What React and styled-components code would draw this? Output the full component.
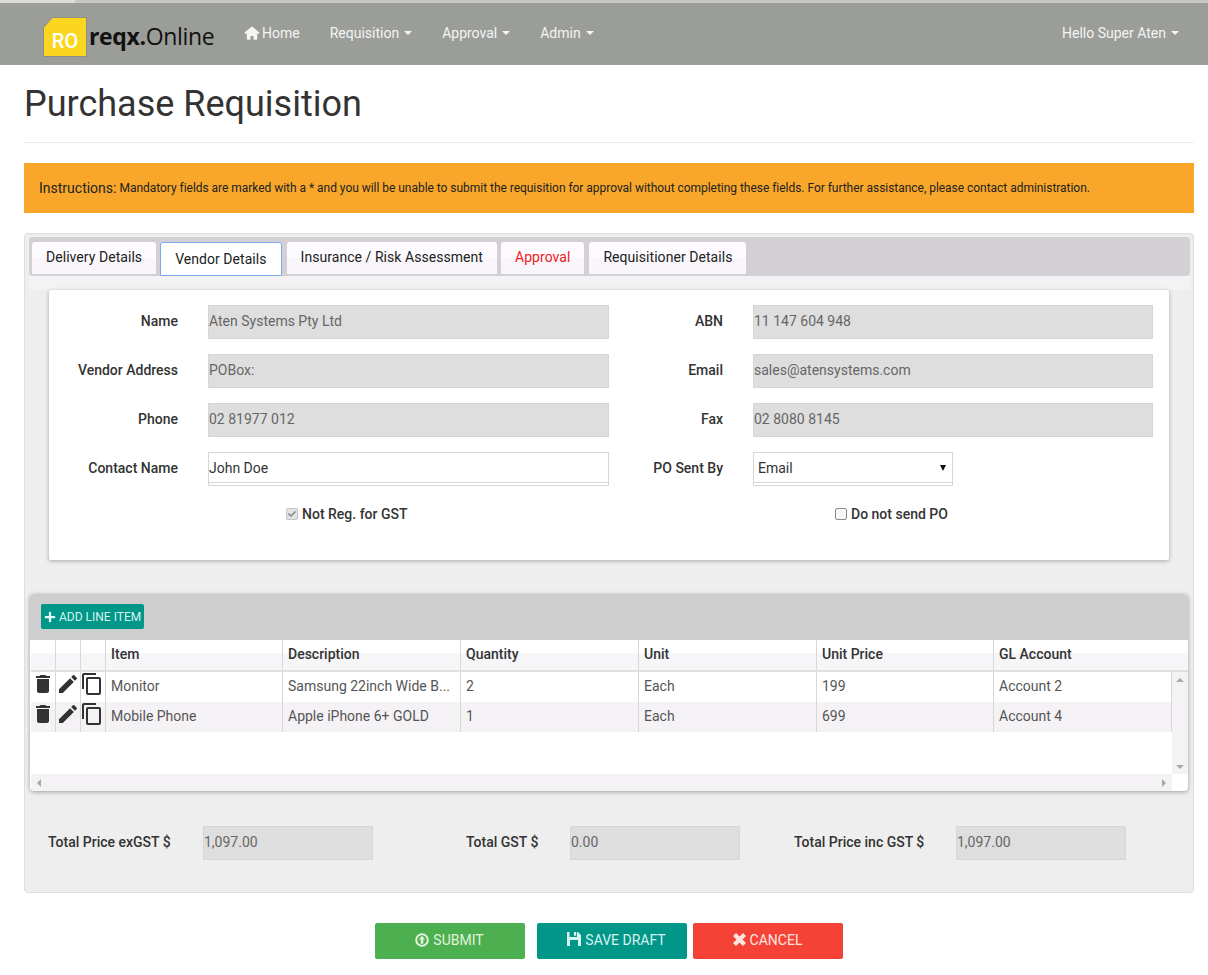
import React from 'react'
import styled, { createGlobalStyle } from 'styled-components'
import { MdDelete, MdEdit, MdContentCopy } from 'react-icons/md'
import { FaPlus, FaCheck } from 'react-icons/fa'
import { TiHome } from 'react-icons/ti'

const GlobalStyle = createGlobalStyle`
  html, body {
    margin: 0;
    padding: 0;
    background: #fff;
    font-family: Roboto, "Liberation Sans", sans-serif;
    font-size: 14px;
    color: #333;
  }
  * { box-sizing: border-box; }
`

const TopStrip = styled.div`
  height: 3px;
  background: linear-gradient(to right, #dcdcdc 75px, #c8c8c8 75px);
`
const Navbar = styled.nav`
  height: 62px;
  background: #9b9d99;
  display: flex;
  align-items: center;
  padding: 0 18px 0 43px;
  color: #f2f2f2;
`
const Brand = styled.div`
  display: flex;
  align-items: center;
  width: 200px;
  padding-top: 6px;
`
const LogoBadge = styled.div`
  position: relative;
  width: 44px;
  height: 40px;
  color: #fff;
  font-size: 20px;
  font-weight: 500;
  display: flex;
  align-items: flex-end;
  justify-content: center;
  padding-bottom: 4px;
  svg {
    position: absolute;
    top: 0;
    left: 0;
  }
  span { position: relative; }
`
const BrandText = styled.div`
  margin-left: 2px;
  font-family: "Open Sans", sans-serif;
  font-size: 23px;
  color: #111;
  margin-top: -3px;
  letter-spacing: -0.35px;
  b { font-weight: 700; }
`
const NavLink = styled.a`
  display: flex;
  align-items: center;
  font-size: 14px;
  margin-right: 30px;
  margin-top: -3px;
  color: #f4f4f4;
  svg { margin-right: 1px; }
`
const Caret = styled.span`
  display: inline-block;
  width: 0;
  height: 0;
  margin-left: 5px;
  border-top: 4px solid #f4f4f4;
  border-left: 4px solid transparent;
  border-right: 4px solid transparent;
`
const NavRight = styled(NavLink)`
  margin-left: auto;
  margin-right: 11px;
`
const Page = styled.main`
  padding: 0 14px 16px 24px;
`
const Title = styled.h1`
  margin: 0;
  padding: 17px 0 16px;
  height: 78px;
  font-size: 36px;
  line-height: 44px;
  font-weight: 400;
  color: #333;
  border-bottom: 1px solid #eee;
`
const Instructions = styled.div`
  margin-top: 20px;
  height: 50px;
  background: #f8a72b;
  display: flex;
  align-items: center;
  padding: 0 15px;
  font-size: 12px;
  letter-spacing: -0.033px;
  color: #222;
  span {
    font-size: 14px;
    letter-spacing: 0;
    margin-right: 3px;
  }
`
const Panel = styled.section`
  margin-top: 20px;
  height: 660px;
  background: #eee;
  border: 1px solid #ddd;
  border-radius: 4px;
  padding: 3px 3px 0 4px;
`
const TabBar = styled.div`
  height: 39px;
  background: #d2d0d4;
  border-radius: 4px;
  display: flex;
  padding: 5px 0 0 3px;
  gap: 4px;
`
const Tab = styled.div`
  height: ${p => (p.$active ? '34px' : '32px')};
  padding: 0 14px ${p => (p.$active ? '0' : '2px')};
  margin-left: ${p => (p.$spaced ? '1px' : '0')};
  background: ${p => (p.$active ? '#fff' : 'linear-gradient(#fdfbff 50%, #f8f6fa 50%)')};
  border: ${p => (p.$active ? '1px solid #7fa9ee' : '0')};
  border-radius: 3px 3px 0 0;
  display: flex;
  align-items: center;
  letter-spacing: 0.05px;
  color: ${p => (p.$warn ? '#f02020' : '#222')};
`
const TabStrip = styled.div`
  height: 14px;
  background: #f4f3f4;
`
const Card = styled.div`
  margin: 0 21px 0 20px;
  height: 270px;
  background: #fff;
  border-radius: 2px;
  box-shadow: 0 1px 4px rgba(0, 0, 0, 0.3);
  padding-top: 15px;
`
const FormGrid = styled.div`
  display: grid;
  grid-template-columns: 129px 401px 84px 400px;
  column-gap: 30px;
  row-gap: 15px;
  grid-auto-rows: 34px;
  align-items: center;
`
const Label = styled.label`
  text-align: right;
  font-weight: 500;
  color: #333;
  white-space: nowrap;
  padding-bottom: 2px;
`
const Field = styled.div`
  height: 34px;
  padding-bottom: 2px;
  display: flex;
  align-items: center;
  background: ${p => (p.$editable ? '#fff' : '#dedede')};
  border: 1px solid #d6d6d6;
  color: ${p => (p.$editable ? '#333' : '#666')};
`
const TextField = styled(Field)`
  box-shadow: inset 0 -2px 0 #fff, inset 0 -3px 0 #d6d6d6;
`
const SelectField = styled(TextField)`
  width: 200px;
  padding: 0 6px 2px 4px;
  justify-content: space-between;
  &::after {
    content: '';
    border-top: 6px solid #111;
    border-left: 3.5px solid transparent;
    border-right: 3.5px solid transparent;
  }
`
const CheckRow = styled.div`
  display: grid;
  grid-template-columns: 545px 1fr;
  margin-top: 20px;
  font-weight: 500;
  color: #333;
`
const CheckItem = styled.div`
  display: flex;
  align-items: center;
  padding-left: ${p => p.$left}px;
  gap: 4px;
`
const CheckBox = styled.span`
  width: 12px;
  height: 12px;
  border: 1px solid ${p => (p.$disabled ? '#c4c4c4' : '#8b8b8b')};
  border-radius: 2px;
  background: ${p => (p.$disabled ? '#e3e3e3' : '#f6f6f6')};
  color: #8a8a8a;
  display: flex;
  align-items: center;
  justify-content: center;
`
const GridBox = styled.div`
  margin: 34px 2px 0 1px;
  height: 197px;
  background: #fff;
  border-radius: 4px;
  box-shadow: 0 1px 4px rgba(0, 0, 0, 0.35);
  overflow: hidden;
  display: flex;
  flex-direction: column;
`
const GridToolbar = styled.div`
  height: 46px;
  background: #cecece;
  padding: 10px 0 0 11px;
`
const AddButton = styled.div`
  width: 103px;
  height: 25px;
  background: #009688;
  border-radius: 2px;
  color: #d8f3ef;
  font-size: 12px;
  display: flex;
  align-items: center;
  padding-left: 3px;
  gap: 3px;
  svg { color: #e8fbf8; }
`
const columns = '25px 25px 25px 177px 178px 178px 178px 177px'
const HeaderRow = styled.div`
  display: grid;
  grid-template-columns: ${columns} 1fr;
  height: 32px;
  margin-left: 1px;
  background: linear-gradient(#fff 45%, #f6f5f7 45%);
  border-bottom: 2px solid #e0e0e0;
`
const HeadCell = styled.div`
  display: flex;
  align-items: center;
  padding: 0 0 2px 5px;
  font-weight: 500;
  color: #333;
  border-right: ${p => (p.$last ? '0' : '1px solid #d8d8d8')};
`
const GridBody = styled.div`
  position: relative;
  flex: 1;
  margin-left: 1px;
`
const DataRow = styled.div`
  display: grid;
  grid-template-columns: ${columns} 178px;
  height: 30px;
  background: ${p => (p.$alt ? '#f5f2f6' : '#fff')};
`
const DataCell = styled.div`
  display: flex;
  align-items: center;
  padding: 0 0 2px 5px;
  color: #555;
  overflow: hidden;
  white-space: nowrap;
  border-right: ${p => (p.$last ? '0' : '1px solid #d8d8d8')};
`
const IconCell = styled.div`
  display: flex;
  color: #333;
  border-right: 1px solid #d8d8d8;
  svg { margin-left: ${p => p.$nudge || 0}px; }
`
const HScroll = styled.div`
  position: absolute;
  left: 0;
  right: 16px;
  bottom: 0;
  height: 17px;
  background: #f5f2f6;
  display: flex;
  align-items: center;
  justify-content: space-between;
  padding: 0 6px;
`
const VScroll = styled.div`
  position: absolute;
  top: 0;
  right: 0;
  bottom: 17px;
  width: 16px;
  background: #f5f2f6;
  display: flex;
  flex-direction: column;
  align-items: center;
  justify-content: space-between;
  padding: 6px 0 5px;
`
const Arrow = styled.span`
  width: 0;
  height: 0;
  ${p => p.$dir === 'left' && 'border-right: 4px solid #a8a8a8; border-top: 4px solid transparent; border-bottom: 4px solid transparent;'}
  ${p => p.$dir === 'right' && 'border-left: 4px solid #a8a8a8; border-top: 4px solid transparent; border-bottom: 4px solid transparent;'}
  ${p => p.$dir === 'up' && 'border-bottom: 4px solid #a8a8a8; border-left: 4px solid transparent; border-right: 4px solid transparent;'}
  ${p => p.$dir === 'down' && 'border-top: 4px solid #a8a8a8; border-left: 4px solid transparent; border-right: 4px solid transparent;'}
`
const Totals = styled.div`
  display: grid;
  grid-template-columns: 155px 170px 93px 104px 170px 54px 162px 170px;
  margin: 35px 0 0 19px;
  align-items: center;
`
const TotalLabel = styled(Label)`
  text-align: left;
  grid-column: ${p => p.$col};
`
const TotalField = styled(Field)`
  grid-column: ${p => p.$col};
`
const Actions = styled.div`
  display: flex;
  justify-content: center;
  margin: 30px 0 0 -1px;
`
const ActionButton = styled.div`
  width: 150px;
  height: 36px;
  margin-left: ${p => p.$gap || 0}px;
  padding: 0 0 2px ${p => p.$pad || 0}px;
  background: ${p => p.$bg};
  border-radius: 2px;
  color: ${p => p.$fg};
  display: flex;
  align-items: center;
  justify-content: center;
  gap: 4px;
`

function LogoShape() {
  return (
    <svg width="44" height="40" viewBox="0 0 44 40">
      <path d="M.5 10.5 9.5.5H43.5V39.5H.5Z" fill="#fad71e" stroke="#8d8f80" />
    </svg>
  )
}

function CircleUp() {
  return (
    <svg width="14" height="14" viewBox="0 0 14 14">
      <circle cx="7" cy="7" r="5.8" fill="none" stroke="currentColor" strokeWidth="2" />
      <path d="M7 2.8 10.2 6.6H8.3V10.8H5.7V6.6H3.8Z" fill="currentColor" />
    </svg>
  )
}

function FloppyIcon() {
  return (
    <svg width="14" height="14" viewBox="0 0 14 14" style={{ marginTop: -3 }}>
      <path
        fill="currentColor"
        fillRule="evenodd"
        d="M0 0H2.5V5H10V0H11L14 3V14H0ZM3 8V14H11V8ZM7 0H9.2V3.8H7Z"
      />
    </svg>
  )
}

function RemoveIcon() {
  return (
    <svg width="13" height="13" viewBox="0 0 13 13" style={{ marginTop: -2 }}>
      <path
        fill="currentColor"
        d="M3 0 6.5 3.5 10 0 13 3 9.5 6.5 13 10 10 13 6.5 9.5 3 13 0 10 3.5 6.5 0 3Z"
      />
    </svg>
  )
}

const lines = [
  ['Monitor', 'Samsung 22inch Wide B...', '2', 'Each', '199', 'Account 2'],
  ['Mobile Phone', 'Apple iPhone 6+ GOLD', '1', 'Each', '699', 'Account 4'],
]
const headers = ['', '', '', 'Item', 'Description', 'Quantity', 'Unit', 'Unit Price', 'GL Account']

export default function App() {
  return (
    <>
      <GlobalStyle />
      <TopStrip />
      <Navbar>
        <Brand>
          <LogoBadge><LogoShape /><span>RO</span></LogoBadge>
          <BrandText><b>reqx.</b>Online</BrandText>
        </Brand>
        <NavLink><TiHome size={18} />Home</NavLink>
        <NavLink>Requisition<Caret /></NavLink>
        <NavLink>Approval<Caret /></NavLink>
        <NavLink>Admin<Caret /></NavLink>
        <NavRight>Hello Super Aten<Caret /></NavRight>
      </Navbar>
      <Page>
        <Title>Purchase Requisition</Title>
        <Instructions>
          <span>Instructions:</span> Mandatory fields are marked with a * and you will be unable to submit the requisition for approval without completing these fields. For further assistance, please contact administration.
        </Instructions>
        <Panel>
          <TabBar>
            <Tab>Delivery Details</Tab>
            <Tab $active>Vendor Details</Tab>
            <Tab $spaced>Insurance / Risk Assessment</Tab>
            <Tab $warn>Approval</Tab>
            <Tab $spaced>Requisitioner Details</Tab>
          </TabBar>
          <TabStrip />
          <Card>
            <FormGrid>
              <Label>Name</Label>
              <Field>Aten Systems Pty Ltd</Field>
              <Label>ABN</Label>
              <Field>11 147 604 948</Field>
              <Label>Vendor Address</Label>
              <Field>POBox:</Field>
              <Label>Email</Label>
              <Field>sales@atensystems.com</Field>
              <Label>Phone</Label>
              <Field>02 81977 012</Field>
              <Label>Fax</Label>
              <Field>02 8080 8145</Field>
              <Label>Contact Name</Label>
              <TextField $editable>John Doe</TextField>
              <Label>PO Sent By</Label>
              <SelectField $editable>Email</SelectField>
            </FormGrid>
            <CheckRow>
              <CheckItem $left={237}>
                <CheckBox $disabled><FaCheck size={8} /></CheckBox>
                Not Reg. for GST
              </CheckItem>
              <CheckItem $left={241}>
                <CheckBox />
                Do not send PO
              </CheckItem>
            </CheckRow>
          </Card>
          <GridBox>
            <GridToolbar>
              <AddButton><FaPlus size={12} />ADD LINE ITEM</AddButton>
            </GridToolbar>
            <HeaderRow>
              {headers.map((h, i) => (
                <HeadCell key={i} $last={i === headers.length - 1}>{h}</HeadCell>
              ))}
            </HeaderRow>
            <GridBody>
              {lines.map((row, r) => (
                <DataRow key={r} $alt={r === 1}>
                  <IconCell><MdDelete size={24} /></IconCell>
                  <IconCell><MdEdit size={24} /></IconCell>
                  <IconCell $nudge={-1}><MdContentCopy size={24} /></IconCell>
                  {row.map((c, i) => (
                    <DataCell key={i}>{c}</DataCell>
                  ))}
                </DataRow>
              ))}
              <HScroll><Arrow $dir="left" /><Arrow $dir="right" /></HScroll>
              <VScroll><Arrow $dir="up" /><Arrow $dir="down" /></VScroll>
            </GridBody>
          </GridBox>
          <Totals>
            <TotalLabel $col={1}>Total Price exGST $</TotalLabel>
            <TotalField $col={2}>1,097.00</TotalField>
            <TotalLabel $col={4}>Total GST $</TotalLabel>
            <TotalField $col={5}>0.00</TotalField>
            <TotalLabel $col={7}>Total Price inc GST $</TotalLabel>
            <TotalField $col={8}>1,097.00</TotalField>
          </Totals>
        </Panel>
        <Actions>
          <ActionButton $bg="#4caf50" $fg="#e2f3d8"><CircleUp />SUBMIT</ActionButton>
          <ActionButton $bg="#009688" $fg="#d8f3ef" $gap={12} $pad={10}><FloppyIcon />SAVE DRAFT</ActionButton>
          <ActionButton $bg="#f44336" $fg="#ffe4e0" $gap={6}><RemoveIcon />CANCEL</ActionButton>
        </Actions>
      </Page>
    </>
  )
}
